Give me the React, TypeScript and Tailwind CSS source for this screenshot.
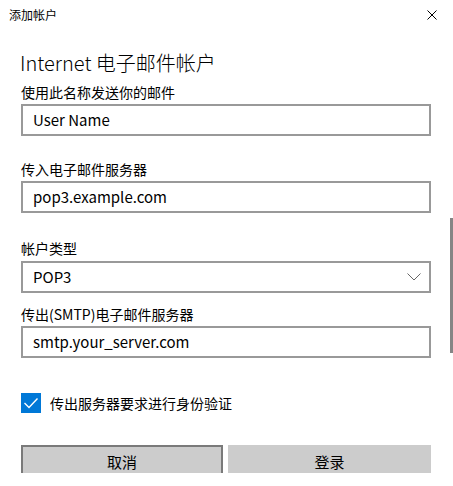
import React from 'react';

const font = { fontFamily: '"Noto Sans CJK SC", "Noto Sans", sans-serif' };

const Field: React.FC<{ label: string; value: string; className?: string }> = ({ label, value, className }) => (
  <div className={className}>
    <div className="text-[14px] leading-[20px] text-black">{label}</div>
    <div className="mt-[2px] h-[32px] border-2 border-[#999999] bg-white pl-[10px] flex items-center text-[15px] text-black">
      {value}
    </div>
  </div>
);

const App: React.FC = () => {
  return (
    <div className="relative w-[453px] h-[486px] bg-white overflow-hidden" style={font}>
      {/* title bar */}
      <div className="flex items-start justify-between pt-[7px] pl-[9px] pr-[16px] h-[40px]">
        <span className="text-[12px] leading-[16px] text-black">添加帐户</span>
        <svg width="10" height="10" viewBox="0 0 10 10" className="mt-[3px]">
          <path d="M0.5 0.5 L9.5 9.5 M9.5 0.5 L0.5 9.5" stroke="#000" strokeWidth="1" fill="none" />
        </svg>
      </div>

      <div className="ml-[21px] w-[410px]">
        <h1 className="text-[20px] leading-[28px] font-light text-black -ml-[1px] mt-[9px]">Internet 电子邮件帐户</h1>

        <Field className="mt-[5px]" label="使用此名称发送你的邮件" value="User Name" />
        <Field className="mt-[23px]" label="传入电子邮件服务器" value="pop3.example.com" />

        <div className="mt-[25px]">
          <div className="text-[14px] leading-[20px] text-black">帐户类型</div>
          <div className="mt-[3px] h-[32px] border-2 border-[#999999] bg-white pl-[10px] pr-[8px] flex items-center justify-between text-[15px] text-black">
            <span>POP3</span>
            <svg width="14" height="8" viewBox="0 0 14 8">
              <path d="M0.5 0.5 L7 7 L13.5 0.5" stroke="#666" strokeWidth="1" fill="none" />
            </svg>
          </div>
        </div>

        <Field className="mt-[11px]" label="传出(SMTP)电子邮件服务器" value="smtp.your_server.com" />

        <div className="mt-[35px] flex items-center gap-[9px]">
          <div className="w-[20px] h-[20px] bg-[#0078d7] flex items-center justify-center">
            <svg width="20" height="20" viewBox="0 0 20 20">
              <path d="M3.5 10 L8 14.5 L16.5 5.5" stroke="#fff" strokeWidth="1.4" fill="none" />
            </svg>
          </div>
          <span className="text-[14px] leading-[20px] text-black">传出服务器要求进行身份验证</span>
        </div>

        <div className="mt-[32px] flex gap-[5px]">
          <button className="w-[202px] h-[28px] bg-[#cccccc] border-2 border-b-0 border-[#7a7a7a] text-[15px] leading-[20px] text-black flex justify-center pt-[5px]">
            取消
          </button>
          <button className="w-[203px] h-[28px] bg-[#cccccc] text-[15px] leading-[20px] text-black flex justify-center pt-[7px]">
            登录
          </button>
        </div>
      </div>

      {/* scrollbar thumb */}
      <div className="absolute right-0 top-[218px] w-[3px] h-[135px] bg-[#858585]" />
    </div>
  );
};

export default App;
